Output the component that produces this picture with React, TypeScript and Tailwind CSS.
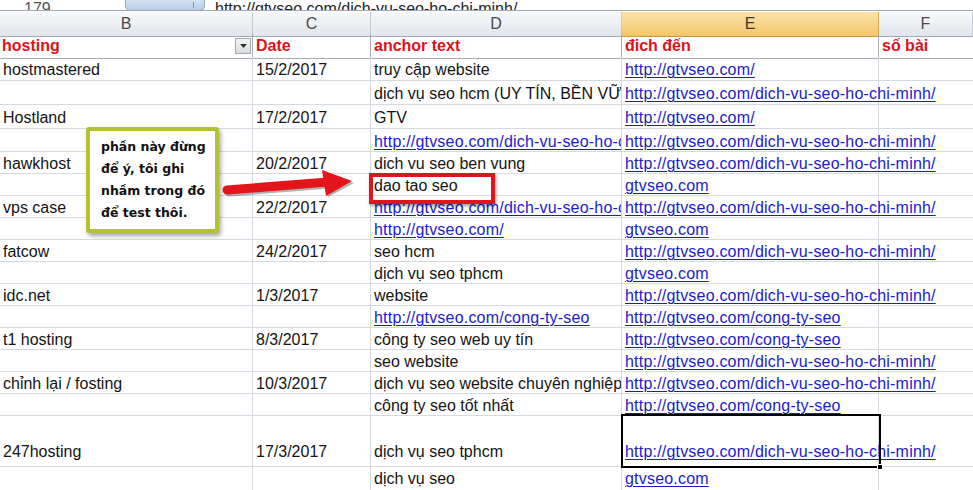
import React from 'react';

type Row = {
  h: number;
  b?: string;
  c?: string;
  d?: string;
  dLink?: boolean;
  e?: string;
  pb: number;
};

const DVSEO = 'http://gtvseo.com/dich-vu-seo-ho-chi-minh/';
const CTSEO = 'http://gtvseo.com/cong-ty-seo';

const rows: Row[] = [
  { h: 24, pb: 1, b: 'hostmastered', c: '15/2/2017', d: 'truy cập website', e: 'http://gtvseo.com/' },
  { h: 24, pb: 1, d: 'dịch vụ seo hcm (UY TÍN, BỀN VỮNG)', e: DVSEO },
  { h: 24, pb: 1, b: 'Hostland', c: '17/2/2017', d: 'GTV', e: 'http://gtvseo.com/' },
  { h: 23, pb: 0, d: DVSEO, dLink: true, e: DVSEO },
  { h: 22, pb: 0, b: 'hawkhost', c: '20/2/2017', d: 'dich vu seo ben vung', e: DVSEO },
  { h: 22, pb: 0, d: 'dao tao seo', e: 'gtvseo.com' },
  { h: 22, pb: 0, b: 'vps case', c: '22/2/2017', d: DVSEO, dLink: true, e: DVSEO },
  { h: 22, pb: 0, d: 'http://gtvseo.com/', dLink: true, e: 'gtvseo.com' },
  { h: 22, pb: 0, b: 'fatcow', c: '24/2/2017', d: 'seo hcm', e: DVSEO },
  { h: 22, pb: 0, d: 'dịch vụ seo tphcm', e: 'gtvseo.com' },
  { h: 22, pb: 0, b: 'idc.net', c: '1/3/2017', d: 'website', e: DVSEO },
  { h: 22, pb: 0, d: CTSEO, dLink: true, e: CTSEO },
  { h: 22, pb: 0, b: 't1 hosting', c: '8/3/2017', d: 'công ty seo web uy tín', e: CTSEO },
  { h: 22, pb: 0, d: 'seo website', e: DVSEO },
  { h: 22, pb: 0, b: 'chỉnh lại / fosting', c: '10/3/2017', d: 'dịch vụ seo website chuyên nghiệp', e: DVSEO },
  { h: 22, pb: 0, d: 'công ty seo tốt nhất', e: CTSEO },
  { h: 51, pb: 5, b: '247hosting', c: '17/3/2017', d: 'dịch vụ seo tphcm', e: DVSEO },
  { h: 24, pb: 2, d: 'dịch vụ seo', e: 'gtvseo.com' },
];

const cols = 'grid grid-cols-[253px_118px_251px_257px_1fr]';

const Link = ({ children }: { children: React.ReactNode }) => (
  <span className="tracking-[0.2px] text-[#1a1ad0] underline decoration-1 underline-offset-2">{children}</span>
);

const Cell = ({
  children,
  pb,
  last = false,
  spill = false,
}: {
  children?: React.ReactNode;
  pb: number;
  last?: boolean;
  spill?: boolean;
}) => (
  <div
    className={`flex items-end whitespace-nowrap border-b border-[#d5d9e0] pl-[3px] leading-[18px] ${last ? '' : 'border-r'} ${
      spill ? 'overflow-visible' : 'overflow-hidden'
    }`}
    style={{ paddingBottom: pb }}
  >
    {children}
  </div>
);

const ColHead = ({ label, active = false }: { label: string; active?: boolean }) => (
  <div
    className={`flex items-center justify-center border-r border-b text-[16px] ${
      active
        ? 'border-[#d9a84a] border-b-[#c99a3e] bg-gradient-to-b from-[#fbe3a8] to-[#f2c66a] text-[#3a3a3a]'
        : 'border-[#c6ccd5] border-b-[#9eaab9] bg-gradient-to-b from-[#f7f9fb] to-[#e1e6ec] text-[#4a4a4a]'
    }`}
  >
    {label}
  </div>
);

export default function App() {
  return (
    <div className="relative h-[490px] w-[973px] overflow-hidden bg-white font-['Liberation_Sans',Arial,sans-serif] text-[16px] text-[#141414]">
      {/* formula bar strip, mostly scrolled off */}
      <div className="flex h-[11px] items-end overflow-hidden border-b border-[#9ea8b8] bg-white">
        <div className="-mb-[11px] w-[125px] pl-[24px] text-[16px] text-[#555]">179</div>
        <div className="-mb-[1px] flex h-[14px] w-[80px] items-end justify-end rounded-b-[5px] border border-[#8fa6c4] bg-gradient-to-b from-[#dbe7f6] to-[#b7cce8] pr-[10px]">
          <div className="mb-[2px] h-[6px] w-[1px] bg-[#7f93ae]" />
        </div>
        <div className="-mb-[11px] ml-[10px] text-[16px] text-[#222]">{DVSEO}</div>
      </div>

      {/* column letters */}
      <div className={`${cols} mt-[1px] h-[22px]`}>
        <ColHead label="B" />
        <ColHead label="C" />
        <ColHead label="D" />
        <ColHead label="E" active />
        <ColHead label="F" />
      </div>

      {/* header row */}
      <div className={`${cols} h-[23px] font-bold text-[#e0101a]`}>
        <div className="flex items-center justify-between border-r border-b border-[#a7abb1] pl-[2px] pr-[1px]">
          <span>hosting</span>
          <span className="flex h-[16px] w-[16px] items-center justify-center border border-[#a3a9b1] bg-gradient-to-b from-[#f4f4f4] to-[#d9dcdf]">
            <svg width="7" height="4" viewBox="0 0 7 4">
              <path d="M0 0h7L3.5 4z" fill="#333" />
            </svg>
          </span>
        </div>
        <div className="flex items-center border-r border-b border-[#a7abb1] pl-[3px]">Date</div>
        <div className="flex items-center border-r border-b border-[#a7abb1] pl-[3px]">anchor text</div>
        <div className="flex items-center border-r border-b border-[#a7abb1] pl-[3px]">đich đến</div>
        <div className="flex items-center border-b border-[#a7abb1] pl-[3px]">số bài</div>
      </div>

      {/* data rows */}
      {rows.map((r, i) => (
        <div key={i} className={cols} style={{ height: r.h }}>
          <Cell pb={r.pb}>{r.b}</Cell>
          <Cell pb={r.pb}>{r.c}</Cell>
          <Cell pb={r.pb}>{r.dLink ? <Link>{r.d}</Link> : r.d}</Cell>
          <Cell pb={r.pb} spill>
            {r.e ? <Link>{r.e}</Link> : null}
          </Cell>
          <Cell pb={r.pb} last />
        </div>
      ))}

      {/* callout note */}
      <div className="absolute left-[86px] top-[127px] h-[106px] w-[133px] rounded-[3px] border-[4px] border-[#b3c22e] bg-white pl-[11px] pt-[5px] font-['DejaVu_Sans',Verdana,sans-serif] text-[12.5px] font-bold leading-[22px] text-[#111] shadow-[2px_3px_4px_rgba(0,0,0,0.35)]">
        <div>phần này đừng</div>
        <div>để ý, tôi ghi</div>
        <div>nhầm trong đó</div>
        <div>để test thôi.</div>
      </div>

      {/* arrow */}
      <svg className="absolute left-[220px] top-[168px]" width="140" height="34" viewBox="0 0 140 34">
        <line x1="9" y1="24" x2="110" y2="16" stroke="rgba(0,0,0,0.3)" strokeWidth="9" strokeLinecap="round" />
        <polygon points="104,5 134,15 108,29" fill="rgba(0,0,0,0.3)" />
        <line x1="7" y1="22" x2="108" y2="14" stroke="#e3151b" strokeWidth="9" strokeLinecap="round" />
        <polygon points="102,2 132,13 106,28" fill="#e3151b" />
      </svg>

      {/* red highlight */}
      <div className="absolute left-[369px] top-[173px] h-[31px] w-[126px] border-[4px] border-[#e0141c] shadow-[1px_2px_3px_rgba(0,0,0,0.4)]" />

      {/* active cell */}
      <div className="absolute left-[621px] top-[414px] h-[54px] w-[260px] border-2 border-black">
        <div className="absolute -bottom-[4px] -right-[4px] h-[6px] w-[6px] border border-white bg-black" />
      </div>
    </div>
  );
}
